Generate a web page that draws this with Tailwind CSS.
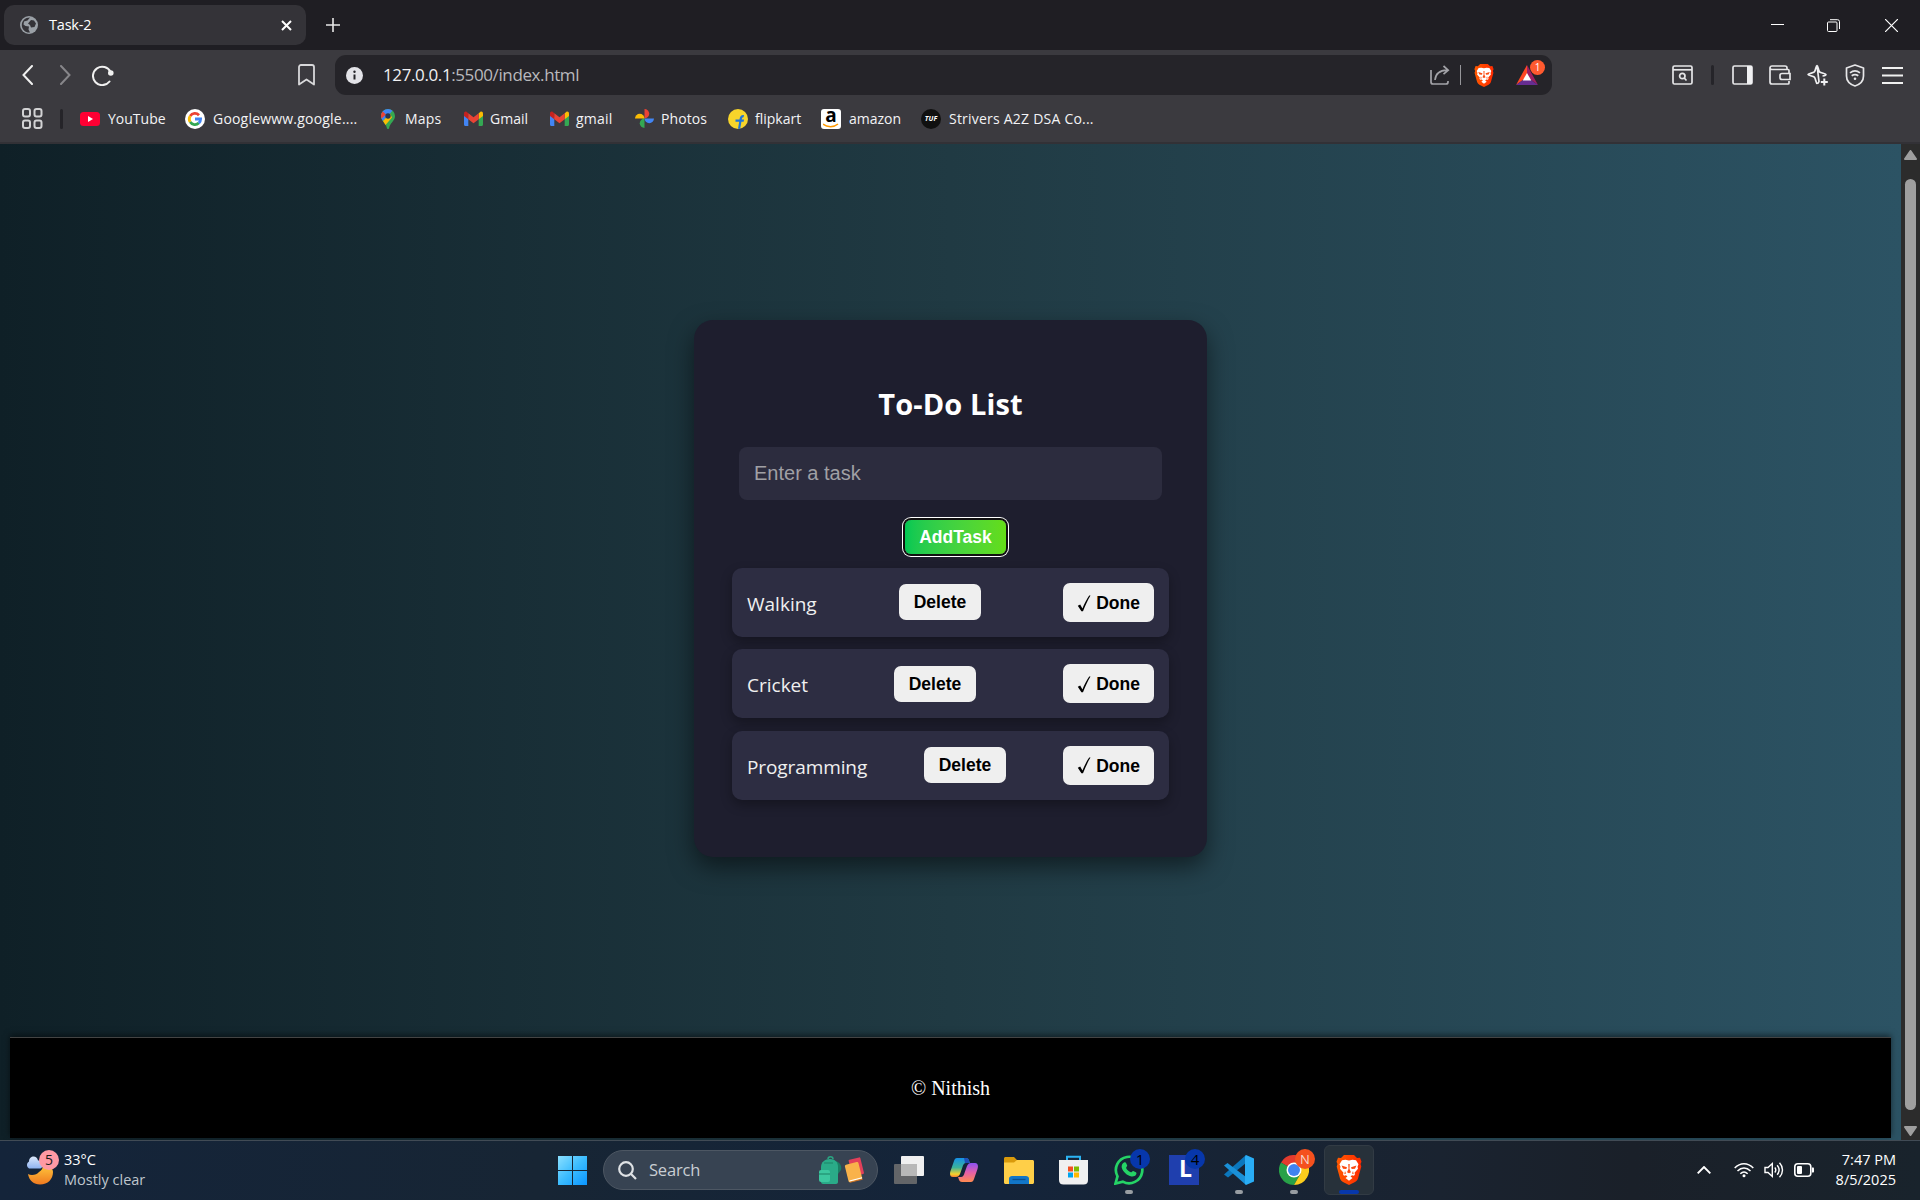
<!DOCTYPE html>
<html lang="en">
<head>
<meta charset="utf-8">
<title>Task-2</title>
<script src="https://cdn.jsdelivr.net/npm/@tailwindcss/browser@4"></script>
</head>
<body class="w-[1920px] h-[1200px] overflow-hidden bg-[#1f1e23] flex flex-col font-['Open_Sans','Noto_Sans',sans-serif]">

<!-- shared symbols -->
<svg class="absolute w-0 h-0">
  <defs>
    <linearGradient id="braveG" x1="0" x2="1"><stop offset="0" stop-color="#ff5a00"/><stop offset="1" stop-color="#ff2a00"/></linearGradient>
    <symbol id="brave" viewBox="0 0 26 30">
      <path fill="url(#braveG)" d="M8 0h10l3 3 3-.3 1.500 4-1 2.300.8 2.500L22 23.500c-.5 1.500-1.500 2.500-3 3.500l-6 3-6-3c-1.500-1-2.500-2-3-3.500L.7 11.500 1.500 9 .5 6.700l1.500-4 3 .3z"/>
      <path fill="#fff" d="M13 5.500l3.500-.7 3.500.4 2.500 4-1 2.500.5 2-3.500 4 .5 1.500-1 1.500-2-.5-1.500 1.200 2 1.700-3.500 2.600-3.500-2.600 2-1.700-1.500-1.200-2 .5-1-1.500.5-1.500-3.500-4 .5-2-1-2.500 2.500-4 3.500-.4z"/>
      <path fill="#fb4a10" d="M5.500 10.500l5.500 1.700-.7 1.800-3.300-.3zM20.500 10.500L15 12.200l.7 1.800 3.300-.3zM12.300 9h1.400l-.2 5 1.500 3.300-2 1-2-1 1.500-3.300zM9 16l1 2.500-1.700.7zM17 16l-1 2.500 1.700.7z"/>
    </symbol>
    <symbol id="gmail" viewBox="0 0 19 15">
      <path fill="#4285f4" d="M0 3v10.500c0 .8.6 1.500 1.300 1.500H4.300V6z"/>
      <path fill="#34a853" d="M14.700 15h3c.7 0 1.300-.7 1.300-1.500V3l-4.300 3z"/>
      <path fill="#c5221f" d="M0 2.500V5l4.300 3.300V2.200L2.800 1C1.500 0 0 1 0 2.500z"/>
      <path fill="#fbbc04" d="M19 2.500V5l-4.300 3.300V2.200L16.200 1C17.500 0 19 1 19 2.500z"/>
      <path fill="#ea4335" d="M4.300 2.200L9.500 6.300l5.200-4.100v6.100L9.500 12.300 4.300 8.300z"/>
    </symbol>
  </defs>
</svg>

<!-- tab strip -->
<div class="h-[50px] shrink-0 flex items-center pl-1 text-white">
  <div class="w-[302px] h-10 rounded-[10px] bg-[#343338] flex items-center pl-4">
    <svg class="w-[18px] h-[18px]" viewBox="0 0 18 18"><circle cx="9" cy="9" r="9" fill="#9aa0a6"/><path d="M10 1.500L7.500 4.500 4 5.500 3.500 8.500l2 1.500 3.500.5-.5 3 1.500 3c-4 .5-8-2.500-8.200-7C1.700 5 5 1.500 10 1.500zM11 4l3 .5 2 3-1.500 3.500-3.500.5L10 9 8 7.500z" fill="#343338"/></svg>
    <span class="ml-[11px] pb-px text-[14.5px] w-[200px] tracking-[-0.2px]">Task-2</span>
    <svg class="ml-8 w-[11px] h-[11px]" viewBox="0 0 11 11" stroke="#fff" stroke-width="2" fill="none"><path d="M1 1l9 9M10 1l-9 9"/></svg>
  </div>
  <svg class="ml-5 w-[14px] h-[14px]" viewBox="0 0 14 14" stroke="#e8e8e8" stroke-width="1.600"><path d="M0 7h14M7 0v14"/></svg>
  <div class="ml-auto flex items-center pr-[22px]">
    <svg class="w-[13px] h-[13px]" viewBox="0 0 13 13" stroke="#fff"><path d="M0 5.500h13"/></svg>
    <svg class="ml-[43px] w-[13px] h-[13px]" viewBox="0 0 13 13" stroke="#fff" fill="none"><rect x=".5" y="3" width="9.500" height="9.500" rx="1"/><path d="M3 .7h7.500a2 2 0 0 1 2 2V10"/></svg>
    <svg class="ml-[45px] w-[13px] h-[13px]" viewBox="0 0 13 13" stroke="#fff" stroke-width="1.200"><path d="M0 0l13 13M13 0L0 13"/></svg>
  </div>
</div>

<!-- toolbar -->
<div class="h-[50px] shrink-0 bg-[#3b3a3f] flex items-center pl-[22px]">
  <svg class="w-[11px] h-5" viewBox="0 0 11 20" fill="none" stroke="#f0f0f0" stroke-width="2" stroke-linecap="round"><path d="M10 1L1.500 10 10 19"/></svg>
  <svg class="ml-[27px] w-[11px] h-5" viewBox="0 0 11 20" fill="none" stroke="#87868a" stroke-width="2" stroke-linecap="round"><path d="M1 1l8.500 9L1 19"/></svg>
  <svg class="ml-[21px] w-[22px] h-[21px]" viewBox="0 0 22 21" fill="none" stroke="#f0f0f0" stroke-width="2" stroke-linecap="round"><path d="M17.500 16.500A9.200 9.200 0 1 1 18.500 7"/><circle cx="18.800" cy="8" r="1.800" fill="#f0f0f0"/></svg>
  <svg class="ml-[184px] w-[17px] h-[22px]" viewBox="0 0 17 22" fill="none" stroke="#d8d8da" stroke-width="1.800" stroke-linejoin="round"><path d="M3 1h11a2 2 0 0 1 2 2v17.500L8.500 15.500 1 20.500V3a2 2 0 0 1 2-2z"/></svg>
  <div class="ml-5 w-[1217px] h-10 rounded-[11px] bg-[#252429] flex items-center pl-[11px]">
    <svg class="w-[17px] h-[17px]" viewBox="0 0 17 17"><circle cx="8.500" cy="8.500" r="8.500" fill="#e3e3e8"/><path d="M8.500 7.500v5" stroke="#252429" stroke-width="2"/><circle cx="8.500" cy="4.800" r="1.200" fill="#252429"/></svg>
    <span class="ml-5 w-[1047px] text-[17px] text-[#b9b9bd] tracking-[-0.39px]"><span class="text-[#f1f1f3]">127.0.0.1</span>:5500/index.html</span>
    <svg class="w-5 h-5" viewBox="0 0 20 20" fill="none" stroke="#a3a3a8" stroke-width="1.700"><path d="M1 5v12a2 2 0 0 0 2 2h13a2 2 0 0 0 2-2v-1M5 15c.5-6 4.500-9.500 12-9.800M13.500 1l4.700 4.200-4.700 4"/></svg>
    <div class="ml-[10px] w-px h-5 bg-[#96969a]"></div>
    <svg class="ml-[13px] w-5 h-[23px]"><use href="#brave"/></svg>
    <div class="relative ml-[22px] w-[22px] h-5">
      <svg class="w-[22px] h-5" viewBox="0 0 22 20"><path d="M11 0L0 20l11-8z" fill="#ff4724"/><path d="M11 0l11 20-11-8z" fill="#9e1f63"/><path d="M0 20l7-5h8l7 5z" fill="#662d91"/><path d="M11 8l4.300 7.500H6.700z" fill="#fff"/></svg>
      <span class="absolute left-[14px] -top-[5px] w-[15px] h-[15px] rounded-full bg-[#ff5a2f] text-white text-[10px] leading-[15px] text-center">1</span>
    </div>
  </div>
  <div class="ml-[120px] flex items-center">
    <svg class="w-[21px] h-5" viewBox="0 0 21 20" fill="none" stroke="#e6e6e8" stroke-width="1.700"><rect x="1" y="1" width="19" height="18" rx="1.500"/><path d="M1 4.800h19"/><circle cx="10.300" cy="11" r="2.700"/><path d="M12.200 13l2.300 2.500"/></svg>
    <div class="ml-[18px] w-[3px] h-5 bg-[#252429] rounded"></div>
    <svg class="ml-[18px] w-[21px] h-5" viewBox="0 0 21 20"><rect x="1" y="1" width="19" height="18" rx="1.500" fill="none" stroke="#e6e6e8" stroke-width="1.700"/><path d="M15 1h5v18h-5z" fill="#f1f1f3"/></svg>
    <svg class="ml-4 w-[22px] h-5" viewBox="0 0 22 20" fill="none" stroke="#e6e6e8" stroke-width="1.700"><path d="M18 4.500V3a2 2 0 0 0-2-2H3a2 2 0 0 0-2 2v14a2 2 0 0 0 2 2h16a1 1 0 0 0 1-1v-2M1 3.500c.5 1 1 1 2 1h16a1 1 0 0 1 1 1V8M21 8.500h-8a2 2 0 0 0-2 2v2a2 2 0 0 0 2 2h8z"/></svg>
    <svg class="ml-4 w-[22px] h-[22px]" viewBox="0 0 22 22" fill="none" stroke="#f0f0f2" stroke-width="1.700" stroke-linejoin="round"><path d="M10 1.500c1 0 1.300 5 2.500 6.300s6.500 1.700 6.500 2.700-1.500 1.200-3.500 1.500M12 17.500c-.5 1.500-1 2-2 2-1 0-1.300-5-2.600-6.300S1 11.500 1 10.500s5-1.300 6.400-2.700S9 1.500 10 1.500z"/><path d="M17.300 14.500v7M13.800 18h7" stroke-width="2"/></svg>
    <svg class="ml-4 w-5 h-[23px]" viewBox="0 0 20 23" fill="none" stroke="#e6e6e8" stroke-width="1.700" stroke-linejoin="round"><path d="M10 1l8.500 3v8c0 5-4 8.500-8.500 10C5.500 20.500 1.500 17 1.500 12V4z"/><path d="M5 8.800c3-2.300 7-2.300 10 0M6.700 11.800c2-1.500 4.600-1.500 6.600 0"/><circle cx="10" cy="14.800" r="1.300" fill="#e6e6e8" stroke="none"/></svg>
    <svg class="ml-[17px] w-[21px] h-[17px]" viewBox="0 0 21 17" stroke="#f0f0f0" stroke-width="1.900"><path d="M0 1h21M0 8.500h21M0 16h21"/></svg>
  </div>
</div>

<!-- bookmarks -->
<div class="h-[44px] shrink-0 bg-[#3b3a3f] border-b-2 border-[#323136] flex items-center pl-[22px] pb-[5px] text-[#f3f3f5] text-[14px] whitespace-nowrap">
  <svg class="w-[21px] h-[21px]" viewBox="0 0 21 21" fill="none" stroke="#d2d2d4" stroke-width="2"><rect x="1" y="1" width="7" height="7.500" rx="2"/><rect x="12.500" y="1" width="7" height="7.500" rx="2"/><rect x="1" y="12.500" width="7" height="7.500" rx="2"/><rect x="12.500" y="12.500" width="7" height="7.500" rx="2"/></svg>
  <div class="ml-[17px] mr-[17px] w-[3px] h-5 bg-[#252429] rounded"></div>
  <div class="w-[105px] flex items-center"><svg class="w-5 h-[14px]" viewBox="0 0 20 14"><rect width="20" height="14" rx="3.500" fill="#ff0033"/><path d="M8 4l5 3-5 3z" fill="#fff"/></svg><span class="ml-2 pb-px">YouTube</span></div>
  <div class="w-[196px] flex items-center"><svg class="w-5 h-5" viewBox="0 0 20 20" fill="none" stroke-width="2.800"><circle cx="10" cy="10" r="10" fill="#fff"/><path d="M14 6.200A5.600 5.600 0 0 0 5.200 7" stroke="#ea4335"/><path d="M5.200 7a5.600 5.600 0 0 0 0 6" stroke="#fbbc04"/><path d="M5.200 13a5.600 5.600 0 0 0 8.600 1.100" stroke="#34a853"/><path d="M13.800 14.100A5.600 5.600 0 0 0 15.600 10H10" stroke="#4285f4"/></svg><span class="ml-2 pb-px tracking-[0.2px]">Googlewww.google....</span></div>
  <div class="w-[83px] flex items-center"><svg class="w-[14px] h-5" viewBox="0 0 14 20"><path d="M7 0a7 7 0 0 1 7 7c0 5-5 6.500-6 12.500-.2.700-1.800.7-2 0C5 14 0 12 0 7a7 7 0 0 1 7-7z" fill="#34a853"/><path d="M7 0a7 7 0 0 1 4.500 1.700L2 12C.8 10.500 0 9 0 7a7 7 0 0 1 7-7z" fill="#4285f4"/><path d="M1.700 2.500L5 5.500l-4.500 4C-.5 7 0 4.500 1.700 2.500z" fill="#ea4335"/><path d="M2 12l7-7.500 2 4-6.500 7.500z" fill="#fbbc04"/><circle cx="7" cy="7" r="2.700" fill="#2a3550"/></svg><span class="ml-[10px] pb-px tracking-[0.2px]">Maps</span></div>
  <div class="w-[86px] flex items-center"><svg class="w-[19px] h-[15px]"><use href="#gmail"/></svg><span class="ml-[7px] pb-px">Gmail</span></div>
  <div class="w-[85px] flex items-center"><svg class="w-[19px] h-[15px]"><use href="#gmail"/></svg><span class="ml-[7px] pb-px tracking-[0.2px]">gmail</span></div>
  <div class="w-[93px] flex items-center"><svg class="w-[19px] h-[19px]" viewBox="0 0 20 20"><path d="M10 0a5 5 0 0 1 0 10z" fill="#ea4335"/><path d="M20 10a5 5 0 0 1-10 0z" fill="#4285f4"/><path d="M10 20a5 5 0 0 1 0-10z" fill="#34a853"/><path d="M0 10a5 5 0 0 1 10 0z" fill="#fbbc04"/></svg><span class="ml-[7px] pb-px tracking-[0.1px]">Photos</span></div>
  <div class="w-[93px] flex items-center"><svg class="w-5 h-5" viewBox="0 0 20 20"><circle cx="10" cy="10" r="10" fill="#f7d52b"/><path d="M10 19.800l1.200-7H7.500v-2.300h4c.3-3 1.500-4.800 4.500-4.500l-.4 2.200c-1.200-.1-1.600.7-1.800 2.300h2.300l-.5 2.300h-2.200l-1.200 7z" fill="#1f74d8"/></svg><span class="ml-[7px] pb-px">flipkart</span></div>
  <div class="w-[100px] flex items-center"><span class="relative w-5 h-5 rounded-[3px] bg-white text-black font-bold text-[19px] leading-[13px] text-center">a<svg class="absolute left-[2px] bottom-px w-4 h-[5px]" viewBox="0 0 16 5" fill="none" stroke="#f90" stroke-width="1.500"><path d="M0 1c4 3.500 11 3.500 15 0"/></svg></span><span class="ml-2 pb-px">amazon</span></div>
  <div class="flex items-center"><span class="w-5 h-5 rounded-full bg-[#101010] text-white font-bold italic text-[7px] leading-5 text-center">TUF</span><span class="ml-2 pb-px tracking-[0.22px]">Strivers A2Z DSA Co...</span></div>
</div>

<!-- page -->
<div class="h-[996px] shrink-0 flex">
  <main class="w-[1901px] bg-linear-[to_right,#0f2027,#203a43_50%,#2c5364] flex flex-col items-center pt-[176px]">
    <section class="w-[513px] h-[537px] rounded-[19px] bg-[#1e1e2e] shadow-[0_10px_25px_rgba(0,0,0,0.5)] flex flex-col items-center pt-[62px]">
      <h1 class="text-white font-bold text-[29px] leading-[44px] tracking-[0.1px]">To-Do List</h1>
      <div class="mt-[21px] w-[423px] h-[53px] rounded-[8px] bg-[#2c2c3e] pl-[15px] text-[20px] leading-[53px] text-[#a0a0a5] font-['Liberation_Sans',Arial,sans-serif]">Enter a task</div>
      <button class="mt-5 ml-[10px] w-[101px] h-[34px] rounded-[6px] bg-linear-to-r from-[#00c853] to-[#64dd17] text-white font-bold text-[17.5px] leading-[34px] font-['Liberation_Sans',Arial,sans-serif] shadow-[0_0_0_2px_#101010,0_0_0_3px_#fff]">AddTask</button>
      <ul class="mt-[14px] w-[437px] flex flex-col gap-[12.4px] text-[#f0f0f0] text-[19px]">
        <li class="h-[69px] rounded-[10px] bg-[#2d2d42] px-[15px] flex items-center justify-between shadow-[0_5px_12px_rgba(0,0,0,0.3)]">
          <span class="w-[70px] pt-[3px]">Walking</span>
          <button class="mb-px w-[82px] h-9 rounded-[7px] bg-[#efefef] text-black font-bold text-[17.5px] leading-9 font-['Liberation_Sans',Arial,sans-serif]">Delete</button>
          <button class="w-[91px] h-[39px] rounded-[7px] bg-[#efefef] text-black font-bold text-[17.5px] flex items-center justify-center gap-[5px] pt-px font-['Liberation_Sans',Arial,sans-serif]"><svg class="w-[14px] h-[17px]" viewBox="0 0 14 17"><path d="M.8 10.700l2.400-1.200 2.200 4C7.300 9 9.600 4.300 12.200.5h1.300C10.700 5 8.300 10.500 6 16.300H4.400z"/></svg>Done</button>
        </li>
        <li class="h-[69px] rounded-[10px] bg-[#2d2d42] px-[15px] flex items-center justify-between shadow-[0_5px_12px_rgba(0,0,0,0.3)]">
          <span class="w-[60px] pt-[3px]">Cricket</span>
          <button class="w-[82px] h-9 rounded-[7px] bg-[#efefef] text-black font-bold text-[17.5px] leading-[34px] font-['Liberation_Sans',Arial,sans-serif]">Delete</button>
          <button class="w-[91px] h-[39px] rounded-[7px] bg-[#efefef] text-black font-bold text-[17.5px] flex items-center justify-center gap-[5px] pt-px font-['Liberation_Sans',Arial,sans-serif]"><svg class="w-[14px] h-[17px]" viewBox="0 0 14 17"><path d="M.8 10.700l2.400-1.200 2.200 4C7.300 9 9.600 4.300 12.200.5h1.300C10.700 5 8.300 10.500 6 16.300H4.400z"/></svg>Done</button>
        </li>
        <li class="h-[69px] rounded-[10px] bg-[#2d2d42] px-[15px] flex items-center justify-between shadow-[0_5px_12px_rgba(0,0,0,0.3)]">
          <span class="w-[120px] pt-[3px] tracking-[-0.1px]">Programming</span>
          <button class="mb-px w-[82px] h-9 rounded-[7px] bg-[#efefef] text-black font-bold text-[17.5px] leading-9 font-['Liberation_Sans',Arial,sans-serif]">Delete</button>
          <button class="w-[91px] h-[39px] rounded-[7px] bg-[#efefef] text-black font-bold text-[17.5px] flex items-center justify-center gap-[5px] pt-px font-['Liberation_Sans',Arial,sans-serif]"><svg class="w-[14px] h-[17px]" viewBox="0 0 14 17"><path d="M.8 10.700l2.400-1.200 2.200 4C7.300 9 9.600 4.300 12.200.5h1.300C10.700 5 8.300 10.500 6 16.300H4.400z"/></svg>Done</button>
        </li>
      </ul>
    </section>
    <footer class="mt-[180px] w-[1881px] h-[101px] bg-black border-t border-[#444] text-white text-center text-[20px] leading-[101px] font-['Liberation_Serif','Times_New_Roman',serif] shadow-[0_-2px_6px_rgba(0,0,0,0.5)]">© Nithish</footer>
  </main>
  <div class="w-[19px] bg-[#2c2c2c] flex flex-col items-center">
    <svg class="mt-[6px] w-[13px] h-[10px]" viewBox="0 0 13 10"><path d="M6.500 1L12 9H1z" fill="#9f9f9f" stroke="#9f9f9f" stroke-linejoin="round" stroke-width="2"/></svg>
    <div class="mt-[19px] w-[11px] h-[931px] rounded-full bg-[#9f9f9f]"></div>
    <svg class="mt-4 w-[13px] h-[10px]" viewBox="0 0 13 10"><path d="M6.500 9L12 1H1z" fill="#9f9f9f" stroke="#9f9f9f" stroke-linejoin="round" stroke-width="2"/></svg>
  </div>
</div>

<!-- taskbar -->
<div class="h-[60px] shrink-0 border-t border-[#414b55] bg-linear-[to_right,#14243a,#172534_28%,#14243a_52%,#1a2330_75%,#1a2029_85%,#19232c] flex items-center pb-px text-white">
  <div class="w-[558px] flex items-center pl-[25px]">
    <div class="relative w-[30px] h-9 mb-1">
      <svg class="w-[30px] h-9" viewBox="0 0 30 36"><defs><linearGradient id="mo" x1="0" x2="0" y1="0" y2="1"><stop offset="0" stop-color="#ffc83d"/><stop offset="1" stop-color="#f07a20"/></linearGradient><linearGradient id="cl" x1="0" x2="0" y1="0" y2="1"><stop offset="0" stop-color="#dbe8fb"/><stop offset="1" stop-color="#8fb3f0"/></linearGradient></defs><path d="M3 24c3 2 9 1 11-2 3-2 4-4 4-7 8 1 10 4 10 7 0 7-5 12.500-13 12.500-6 0-11-4-12-10.500z" fill="url(#mo)"/><path d="M4 18.500a4 4 0 0 1 0-7c0-6 8-7 9-1 5-1 6 8 2 8z" fill="url(#cl)"/></svg>
      <span class="absolute left-[14px] top-0 w-5 h-5 rounded-full bg-[#ff99a4] text-[#1c1c1c] text-[14px] leading-5 text-center">5</span>
    </div>
    <div class="ml-[9px] text-[14.5px] leading-5"><div>33°C</div><div class="text-[#bfc6cd]">Mostly clear</div></div>
  </div>
  <svg class="w-[29px] h-[29px]" viewBox="0 0 29 29"><defs><linearGradient id="wi" gradientUnits="userSpaceOnUse" x1="0" y1="0" x2="29" y2="29"><stop offset="0" stop-color="#8be0ff"/><stop offset=".5" stop-color="#3bbcff"/><stop offset="1" stop-color="#0a95ff"/></linearGradient></defs><path fill="url(#wi)" d="M0 0h14v14H0zM15 0h14v14H15zM0 15h14v14H0zM15 15h14v14H15z"/></svg>
  <div class="ml-4 w-[275px] h-10 rounded-full bg-[#374352] border border-[#4d5763] flex items-center pl-[14px]">
    <svg class="w-[19px] h-[19px]" viewBox="0 0 19 19" fill="none" stroke="#dfe2e5" stroke-width="2.200"><circle cx="8" cy="8" r="6.800"/><path d="M12.800 12.800l5.200 5.200"/></svg>
    <span class="ml-3 w-[170px] text-[16.5px] text-[#c9ced3] tracking-[-0.2px]">Search</span>
    <svg class="w-[45px] h-7" viewBox="0 0 45 28"><path d="M16 5c5 1 7 5 6 9l-3 4z" fill="#1a7f64"/><path d="M9 3c0-3 5-3 5 0" stroke="#2aa582" stroke-width="1.500" fill="none"/><path d="M2 11c0-5 4-8 9-8s8 3 8 8v15c0 1-1 2-2 2H4c-1 0-2-1-2-2z" fill="#2aab88"/><rect x="0" y="14" width="11" height="12" rx="2" fill="#3cc79f"/><path d="M0 18h11M5 7h9" stroke="#1b8467" stroke-width="1.200"/><g transform="rotate(-14 35 14)"><rect x="32" y="3" width="12" height="17" rx="1" fill="#e2405a"/><rect x="27" y="7" width="14" height="18" rx="1.500" fill="#f9b24a"/><path d="M28 23.500h13" stroke="#fff" stroke-width="1"/><path d="M28 25h13" stroke="#c56b25" stroke-width="1"/></g></svg>
  </div>
  <svg class="ml-4 w-[30px] h-[28px]" viewBox="0 0 30 28"><rect x="0" y="8" width="23" height="20" rx="1" fill="#636568"/><rect x="7" y="0" width="23" height="20" rx="1" fill="#f0f0f0"/><path d="M7 8h16v12H7z" fill="#b8b8b8"/></svg>
  <svg class="ml-[26px] w-7 h-[26px]" viewBox="0 0 28 26"><defs><linearGradient id="ca" x1="0" x2="0" y1="0" y2="1"><stop offset="0" stop-color="#1690e8"/><stop offset=".5" stop-color="#3bb39b"/><stop offset=".85" stop-color="#f6d22c"/><stop offset="1" stop-color="#f77b35"/></linearGradient><linearGradient id="cb" x1="0" x2="0" y1="0" y2="1"><stop offset="0" stop-color="#8b52f4"/><stop offset=".5" stop-color="#e560a8"/><stop offset="1" stop-color="#ff8a50"/></linearGradient></defs><path d="M21 25h-9c-3 0-3-3-4-5h3c2 0 3-2 3.500-4L17 9c1-2 2-3 4-3h4c3 0 3.500 3 2.500 6L24 22c-.6 2-1.500 3-3 3z" fill="url(#cb)"/><path d="M7 1h9c3 0 3 3 4 5h-4c-2 0-3 2-3.500 4L10 17c-1 2-2 3-4 3H3c-3 0-3.500-3-2.500-6L4 4c.6-2 1.500-3 3-3z" fill="url(#ca)"/><path d="M14 1h2c3 0 3 3 4 5h-5z" fill="#1f4fb8"/></svg>
  <svg class="ml-[26px] w-[30px] h-[27px]" viewBox="0 0 30 27"><path d="M0 1.500C0 .7.700 0 1.500 0H10l3 3h15.500V12H0z" fill="#d99a0b"/><path d="M0 5.500h10l3-2.500h15.500c.8 0 1.500.7 1.500 1.500v21c0 .8-.7 1.500-1.500 1.500h-27C.7 27 0 26.300 0 25.500z" fill="#ffcf48"/><path d="M5 27v-5.500C5 20 6.500 19 8 19h14c1.500 0 3 1 3 2.500V27z" fill="#1276c8"/><path d="M8.500 22.500h13" stroke="#0b4f8f" stroke-width="1.300"/></svg>
  <svg class="ml-[25px] w-[29px] h-[30px]" viewBox="0 0 29 30"><path d="M8 6V1.800h13V6" fill="none" stroke="#2bb3f3" stroke-width="2"/><path d="M0 5h29v20c0 3-1.500 4.500-4.500 4.500h-20C1.500 29.500 0 28 0 25z" fill="#f0f0f0"/><path d="M9 11.500h5v5H9z" fill="#f25022"/><path d="M15 11.500h5v5h-5z" fill="#7fba00"/><path d="M9 17.500h5v5H9z" fill="#00a4ef"/><path d="M15 17.500h5v5h-5z" fill="#ffb900"/></svg>
  <div class="relative ml-[26px] w-[30px] h-[30px]">
    <svg class="w-[30px] h-[30px]" viewBox="0 0 30 30"><path d="M1.500 28.500l2-7.200A13.200 13.200 0 1 1 8.800 26.600z" fill="none" stroke="#25d366" stroke-width="2.700"/><path d="M10 7.500c1-.6 1.800-.3 2.200.7l1 2.300c.2.700-1.300 2-1.100 2.500 1 2 2.500 3.400 4.800 4.300.6.200 1.600-1.600 2.300-1.400l2.700 1.300c.8.400.6 1.500.2 2.400-.8 1.700-3 2.200-4.600 1.900-4.500-.9-8.500-4.500-9.800-9-.4-1.800.7-4.200 2.300-5z" fill="#25d366"/></svg>
    <span class="absolute left-4 -top-[6px] w-5 h-5 rounded-full bg-[#0737ab] text-black text-[15px] leading-5 text-center">1</span>
    <span class="absolute left-[11px] top-[35px] w-2 h-1 rounded-full bg-[#989da2]"></span>
  </div>
  <div class="relative ml-[25px] w-[30px] h-[30px] bg-[#1f3fae] text-white font-bold text-[23px] leading-[27px] pl-[10px]">L
    <span class="absolute left-4 -top-[6px] w-5 h-5 rounded-full bg-[#0737ab] text-black font-normal text-[15px] leading-5 text-center">4</span>
  </div>
  <div class="relative ml-[25px] w-[30px] h-[30px]">
    <svg class="w-[30px] h-[30px]" viewBox="0 0 30 30"><path d="M22 0v8L4 22.500 0 19.500z" fill="#0b77bd"/><path d="M0 10.500L3.500 8 22 22v8z" fill="#1a90d8"/><path d="M22 0l8 3.500v23L22 30l-1-1.500v-27z" fill="#29adf5"/></svg>
    <span class="absolute left-[11px] top-[35px] w-2 h-1 rounded-full bg-[#989da2]"></span>
  </div>
  <div class="relative ml-[25px] w-[30px] h-[30px]">
    <svg class="w-[30px] h-[30px]" viewBox="0 0 30 30"><path d="M15 15L2 7.500A15 15 0 0 1 28 7.500H15z" fill="#e33b2e"/><path d="M15 15l6.500 3.700L15 30A15 15 0 0 1 2 7.500z" fill="#28a148"/><path d="M15 7.500h13A15 15 0 0 1 15 30l6.500-11.300z" fill="#fccd1d"/><circle cx="15" cy="15" r="7.500" fill="#fff"/><circle cx="15" cy="15" r="6" fill="#3f83f0"/></svg>
    <span class="absolute left-4 -top-[6px] w-5 h-5 rounded-full bg-[#f5511e] text-[#f5d8ce] text-[13px] leading-5 text-center">N</span>
    <span class="absolute left-[11px] top-[35px] w-2 h-1 rounded-full bg-[#989da2]"></span>
  </div>
  <div class="relative ml-[15px] w-[50px] h-[50px] rounded-[6px] bg-[#27313a] border border-[#323b44] flex items-center justify-center">
    <svg class="w-[26px] h-[30px]"><use href="#brave"/></svg>
    <span class="absolute left-[14px] bottom-0 w-5 h-1 rounded-full bg-[#0737ab]"></span>
  </div>
  <div class="ml-auto flex items-center pr-[24px]">
    <svg class="w-[14px] h-2" viewBox="0 0 14 8" fill="none" stroke="#fff" stroke-width="1.900"><path d="M.7 7.300L7 1l6.300 6.300"/></svg>
    <svg class="ml-[23px] w-5 h-4" viewBox="0 0 20 16" fill="none" stroke="#fff" stroke-width="1.500"><path d="M.7 6c5.500-5.700 13-5.700 18.600 0M3.500 9c4-4 9-4 13 0M6.300 11.800c2.300-2.200 5.100-2.200 7.400 0"/><circle cx="10" cy="13.800" r="1.500" fill="#fff" stroke="none"/></svg>
    <svg class="ml-[10px] w-5 h-[18px]" viewBox="0 0 20 18" fill="none" stroke="#fff" stroke-width="1.400"><path d="M1 6.500h3L8.300 2.500v13L4 11.500H1zM10.800 6.500c1.200 1.500 1.200 3.500 0 5M13.200 4.300c2.300 2.800 2.300 6.600 0 9.400M15.500 1.800c4 4.300 4 10.100 0 14.400"/></svg>
    <svg class="ml-[10px] w-5 h-[14px]" viewBox="0 0 20 14"><rect x=".8" y=".8" width="16" height="12.400" rx="3" fill="none" stroke="#fff" stroke-width="1.600"/><rect x="3" y="3" width="5" height="8" rx="1" fill="#fff"/><path d="M18 4.500h1c.7 0 1 .5 1 1v3c0 .5-.3 1-1 1h-1z" fill="#fff"/></svg>
    <div class="w-[82px] text-right text-[14.5px] leading-5"><div>7:47 PM</div><div>8/5/2025</div></div>
  </div>
</div>
</body>
</html>
